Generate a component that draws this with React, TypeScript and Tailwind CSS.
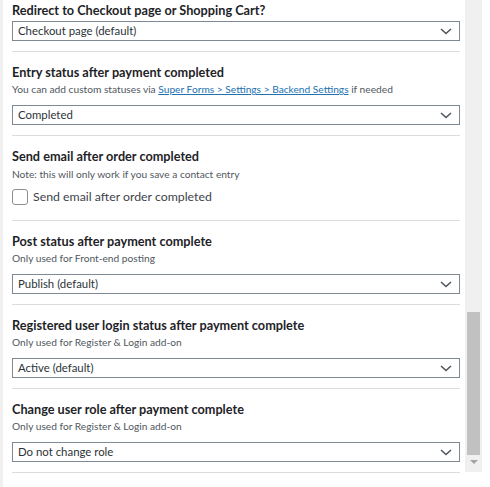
import React from 'react';

type Field = {
  title: string;
  note?: React.ReactNode;
  value?: string;
  checkbox?: string;
};

const fields: Field[] = [
  {
    title: 'Entry status after payment completed',
    note: (
      <>
        You can add custom statuses via{' '}
        <a href="#" className="text-[#2271b1] underline">Super Forms &gt; Settings &gt; Backend Settings</a> if needed
      </>
    ),
    value: 'Completed',
  },
  {
    title: 'Send email after order completed',
    note: 'Note: this will only work if you save a contact entry',
    checkbox: 'Send email after order completed',
  },
  { title: 'Post status after payment complete', note: 'Only used for Front-end posting', value: 'Publish (default)' },
  { title: 'Registered user login status after payment complete', note: 'Only used for Register & Login add-on', value: 'Active (default)' },
  { title: 'Change user role after payment complete', note: 'Only used for Register & Login add-on', value: 'Do not change role' },
];

function Chevron() {
  return (
    <svg width="12" height="7" viewBox="0 0 12 7" className="shrink-0">
      <path d="M1 1l5 4.5L11 1" fill="none" stroke="#50575e" strokeWidth="1.6" />
    </svg>
  );
}

function Select({ value }: { value: string }) {
  return (
    <div className="flex h-[20px] items-center justify-between border border-[#7e8993] bg-white pl-[5px] pr-[7px] text-[11.4px] text-[#2c3338]">
      <span>{value}</span>
      <Chevron />
    </div>
  );
}

export default function App() {
  return (
    <div className="flex h-[487px] w-[490px] overflow-hidden bg-white font-['Lato',sans-serif]">
      <div className="w-[3px] shrink-0 bg-[#f0f0f0]" />
      <div className="ml-[9px] w-[448px] shrink-0">
        <div className="border-b border-[#dcdcde] pb-[10px] pt-[1px]">
          <h3 className="text-[12.7px] font-bold leading-[18px] text-[#1d2327]">Redirect to Checkout page or Shopping Cart?</h3>
          <div className="mt-[2px]">
            <Select value="Checkout page (default)" />
          </div>
        </div>
        {fields.map((f) => (
          <div key={f.title} className={`border-b border-[#dcdcde] pt-[11px] ${f.checkbox ? 'pb-[13px]' : 'pb-[10px]'}`}>
            <h3 className="text-[12.7px] font-bold leading-[18px] text-[#1d2327]">{f.title}</h3>
            <p className={`text-[10.2px] leading-[14px] text-[#50575e] ${f.checkbox ? 'mt-[2px]' : 'mt-[1px]'}`}>{f.note}</p>
            {f.value && (
              <div className="mt-[9px]">
                <Select value={f.value} />
              </div>
            )}
            {f.checkbox && (
              <label className="mt-[6px] flex h-[20px] items-center gap-[5px] text-[12.3px] text-[#3c434a]">
                <span className="h-[16px] w-[16px] rounded-[3px] border border-[#8c8f94] bg-white" />
                {f.checkbox}
              </label>
            )}
          </div>
        ))}
      </div>
      <div className="ml-[5px] flex h-[472px] w-[17px] shrink-0 flex-col items-center bg-[#f0f0f0]">
        <div className="mt-[312px] h-[143px] w-[13px] bg-[#c1c1c1]" />
        <div className="mt-[5px] h-0 w-0 border-x-[4px] border-t-[4px] border-x-transparent border-t-[#a3a3a3]" />
      </div>
    </div>
  );
}
